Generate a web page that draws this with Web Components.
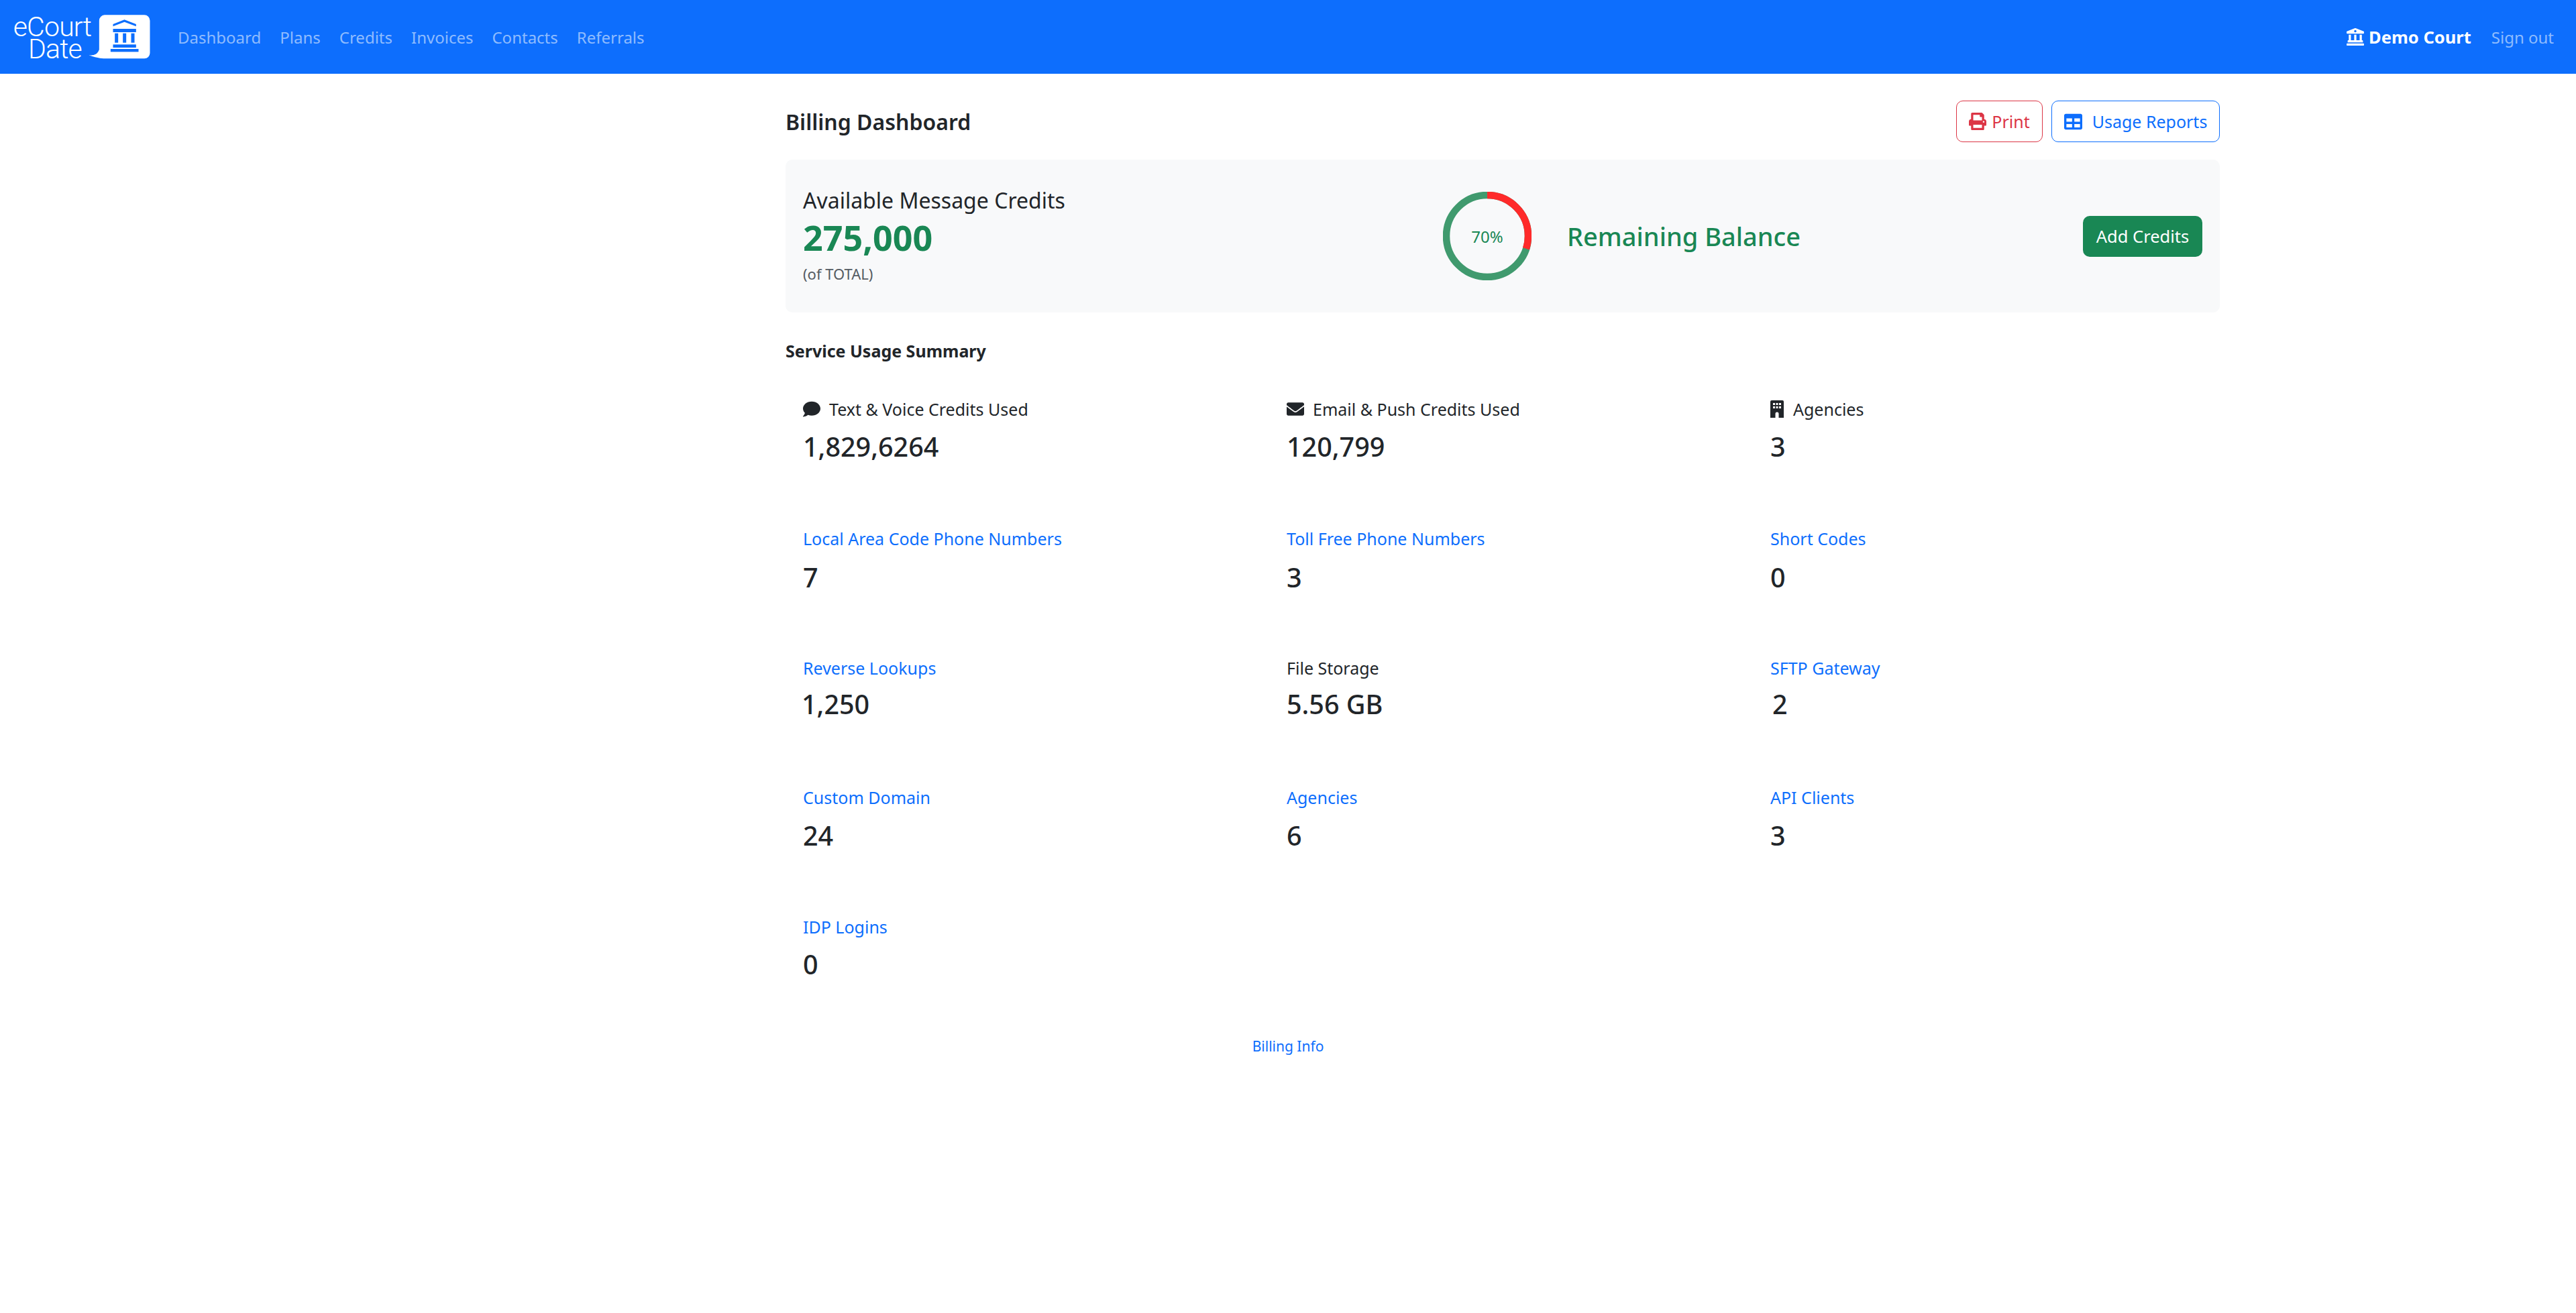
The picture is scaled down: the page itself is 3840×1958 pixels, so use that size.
<!DOCTYPE html>
<html lang="en">
<head>
<meta charset="utf-8">
<title>Billing Dashboard</title>
<style>
  html, body { margin: 0; background: #fff; }
  body { font-family: "Noto Sans", "Open Sans", sans-serif; color: #212529; font-size: 24px; }
</style>
</head>
<body>
<app-navbar></app-navbar>
<billing-page></billing-page>

<template id="icons">
  <svg id="landmark" viewBox="0 0 512 512"><path d="M501.62 92.11L267.24 2.04a31.958 31.958 0 0 0-22.47 0L10.38 92.11A16.001 16.001 0 0 0 0 107.09V144c0 8.84 7.16 16 16 16h480c8.84 0 16-7.16 16-16v-36.91c0-6.67-4.14-12.64-10.38-14.98zM64 192v160H48c-8.84 0-16 7.16-16 16v48h448v-48c0-8.84-7.16-16-16-16h-16V192h-64v160h-96V192h-64v160h-96V192H64zm432 256H16c-8.84 0-16 7.16-16 16v32c0 8.84 7.16 16 16 16h480c8.84 0 16-7.16 16-16v-32c0-8.84-7.16-16-16-16z"/><circle cx="256" cy="88" r="34" fill="#0d6efd"/></svg>
  <svg id="print" viewBox="0 0 512 512"><path d="M448 192V77.25c0-8.49-3.37-16.62-9.37-22.63L393.37 9.37c-6-6-14.14-9.37-22.63-9.37H96C78.33 0 64 14.33 64 32v160c-35.35 0-64 28.65-64 64v112c0 8.84 7.16 16 16 16h48v96c0 17.67 14.33 32 32 32h320c17.67 0 32-14.33 32-32v-96h48c8.84 0 16-7.16 16-16V256c0-35.35-28.65-64-64-64zm-64 256H128v-96h256v96zm0-224H128V64h192v48c0 8.84 7.16 16 16 16h48v96zm48 72c-13.25 0-24-10.75-24-24 0-13.26 10.75-24 24-24s24 10.74 24 24c0 13.25-10.75 24-24 24z"/></svg>
  <svg id="table" viewBox="0 0 512 512"><path d="M464 32H48C21.49 32 0 53.49 0 80v352c0 26.51 21.49 48 48 48h416c26.51 0 48-21.49 48-48V80c0-26.51-21.49-48-48-48zM224 416H64v-96h160v96zm0-160H64v-96h160v96zm224 160H288v-96h160v96zm0-160H288v-96h160v96z"/></svg>
  <svg id="comment" viewBox="0 0 512 512"><path d="M256 32C114.6 32 0 125.1 0 240c0 49.6 21.4 95 57 130.7C44.5 421.1 2.7 466 2.2 466.5c-2.2 2.3-2.8 5.7-1.5 8.7S4.8 480 8 480c66.3 0 116-31.8 140.6-51.4 32.7 12.3 69 19.4 107.4 19.4 141.4 0 256-93.1 256-208S397.4 32 256 32z"/></svg>
  <svg id="envelope" viewBox="0 0 512 512"><path d="M502.3 190.8c3.9-3.1 9.7-.2 9.7 4.7V400c0 26.5-21.5 48-48 48H48c-26.5 0-48-21.5-48-48V195.6c0-5 5.7-7.8 9.7-4.7 22.4 17.4 52.1 39.5 154.1 113.6 21.1 15.4 56.7 47.8 92.2 47.6 35.7.3 72-32.8 92.3-47.6 102-74.1 131.6-96.3 154-113.7zM256 320c23.2.4 56.6-29.2 73.4-41.4 132.7-96.3 142.8-104.7 173.4-128.7 5.8-4.5 9.2-11.5 9.2-18.9v-19c0-26.5-21.5-48-48-48H48C21.5 64 0 85.5 0 112v19c0 7.4 3.4 14.3 9.2 18.9 30.6 23.9 40.7 32.4 173.4 128.7 16.8 12.2 50.2 41.8 73.4 41.4z"/></svg>
  <svg id="building" viewBox="0 0 20 26"><path fill-rule="evenodd" d="M2 0H18a2 2 0 0 1 2 2V26H12.5V20a2.5 2.5 0 0 0-5 0V26H0V2a2 2 0 0 1 2-2zM4 4v3h3V4zM8.5 4v3h3V4zM13 4v3h3V4zM4 9v3h3V9zM8.5 9v3h3V9zM13 9v3h3V9z"/></svg>
</template>

<script>
const iconMarkup = (name) =>
  document.querySelector("#icons").content.querySelector("#" + name).outerHTML.replace(/id="[^"]*"/, "");

/** Icon */
class FaIcon extends HTMLElement {
  connectedCallback() {
    const root = this.shadowRoot || this.attachShadow({ mode: "open" });
    root.innerHTML = `
<style>
  :host { display: inline-flex; width: var(--icon-w, 26px); height: var(--icon-h, 26px); flex: none; }
  :host([name="building"]) { width: 20px; margin-right: 1px; }
  svg { width: 100%; height: 100%; fill: currentColor; display: block; }
</style>
${iconMarkup(this.getAttribute("name"))}`;
  }
}
customElements.define("fa-icon", FaIcon);

/** Navbar */
class AppNavbar extends HTMLElement {
  constructor() {
    super();
    const links = ["Dashboard", "Plans", "Credits", "Invoices", "Contacts", "Referrals"];
    this.attachShadow({ mode: "open" }).innerHTML = `
<style>
  :host { display: flex; align-items: center; height: 110px; background: #0d6efd; box-sizing: border-box; padding: 0 33px 0 18px; }
  .logo-text { width: 120px; font-family: Roboto, "Liberation Sans", sans-serif; font-weight: 300; font-size: 41px; line-height: 33px; letter-spacing: -0.8px; color: #fff; text-align: center; margin-top: 4px; }
  .logo-text span { display: block; }
  .logo-text .d { padding-left: 8px; }
  .bubble { width: 97px; height: 70px; margin: 0 0 0 -8px; flex: none; }
  nav { display: flex; margin-left: 24px; }
  a { color: rgba(255,255,255,.55); text-decoration: none; padding: 0 14px; white-space: nowrap; }
  .right { margin-left: auto; display: flex; align-items: center; }
  .court { color: #fff; font-weight: 700; font-size: 25.5px; display: flex; align-items: center; gap: 7px; margin-right: 16px; }
  .right a { padding: 0 0 0 14px; }
</style>
<div class="logo-text"><span>eCourt</span><span class="d">Date</span></div>
<svg class="bubble" viewBox="30 30 290 210" fill="#fff">
  <path d="M107 37H285a25 25 0 0 1 25 25V207a25 25 0 0 1-25 25H115C100 232 80 232 37 217C62 219 76 212 83 192V62a25 25 0 0 1 24-25z"/>
  <g fill="#0d6efd">
    <path d="M145 78L196 58L248 78V88L196 68L145 88z"/>
    <rect x="145" y="99" width="103" height="15"/>
    <rect x="153" y="119" width="15" height="42"/>
    <rect x="189" y="119" width="15" height="42"/>
    <rect x="226" y="119" width="15" height="42"/>
    <rect x="145" y="169" width="103" height="14"/>
    <rect x="134" y="189" width="125" height="13"/>
  </g>
</svg>
<nav>${links.map((l) => `<a href="#">${l}</a>`).join("")}</nav>
<div class="right">
  <div class="court"><fa-icon name="landmark"></fa-icon><span>Demo Court</span></div>
  <a href="#">Sign out</a>
</div>`;
  }
}
customElements.define("app-navbar", AppNavbar);

/** Outline button */
class OutlineButton extends HTMLElement {
  constructor() {
    super();
    this.attachShadow({ mode: "open" }).innerHTML = `
<style>
  :host { display: inline-flex; align-items: center; justify-content: center; box-sizing: border-box; height: 62px; border: 1.6px solid currentColor; border-radius: 10px; font-size: 25px; white-space: nowrap; }
</style>
<slot></slot>`;
  }
}
customElements.define("outline-button", OutlineButton);

/** Progress ring */
class ProgressRing extends HTMLElement {
  constructor() {
    super();
    const pct = Number(this.getAttribute("remaining") || 70);
    const r = 61;
    const c = 2 * Math.PI * r;
    this.attachShadow({ mode: "open" }).innerHTML = `
<style>
  :host { display: grid; place-items: center; width: 132px; height: 132px; flex: none; font-size: 24px; color: #198754; }
  svg, span { grid-area: 1 / 1; }
  svg { width: 132px; height: 132px; transform: rotate(-90deg); }
  circle { fill: none; stroke-width: 10.5; }
</style>
<svg viewBox="0 0 132 132">
  <circle cx="66" cy="66" r="${r}" stroke="#409a6e"></circle>
  <circle cx="66" cy="66" r="${r}" stroke="#ff2a2a" stroke-dasharray="${(c * (100 - pct)) / 100} ${c}"></circle>
</svg>
<span>${pct}%</span>`;
  }
}
customElements.define("progress-ring", ProgressRing);

/** Balance panel */
class BalancePanel extends HTMLElement {
  constructor() {
    super();
    this.attachShadow({ mode: "open" }).innerHTML = `
<style>
  :host { display: grid; grid-template-columns: 954px 1fr auto; align-items: center; height: 228px; box-sizing: border-box; padding: 0 26px; background: #f8f9fa; border-radius: 10px; }
  .title { font-size: 32px; line-height: 42px; margin-top: -2px; }
  .num { font-size: 52px; line-height: 62px; font-weight: 700; color: #198754; margin-top: 3px; }
  .sub { font-size: 22px; line-height: 34px; color: #555c63; margin-top: 6px; }
  .mid { display: flex; align-items: center; gap: 53px; }
  .bal { font-size: 38px; font-weight: 500; color: #198754; white-space: nowrap; }
  .add { display: flex; align-items: center; justify-content: center; width: 178px; height: 61px; background: #198754; color: #fff; border-radius: 10px; font-size: 25.5px; }
</style>
<div>
  <div class="title">Available Message Credits</div>
  <div class="num">275,000</div>
  <div class="sub">(of TOTAL)</div>
</div>
<div class="mid"><progress-ring remaining="70"></progress-ring><div class="bal">Remaining Balance</div></div>
<div class="add">Add Credits</div>`;
  }
}
customElements.define("balance-panel", BalancePanel);

/** One figure of the usage summary */
class UsageStat extends HTMLElement {
  constructor() {
    super();
    const icon = this.getAttribute("icon");
    const link = this.hasAttribute("link");
    const nudge = this.getAttribute("nudge") || 0;
    const dy = Number(this.getAttribute("dy") || 0);
    this.attachShadow({ mode: "open" }).innerHTML = `
<style>
  :host { display: block; height: 193px; }
  .label { display: flex; align-items: center; height: 40px; margin-top: -2px; font-size: 25px; white-space: nowrap; gap: 13px; color: ${link ? "#0d6efd" : "#212529"}; }
  .value { font-size: 39.5px; font-weight: 500; line-height: 50px; margin-top: ${11 + dy}px; margin-left: ${nudge}px; }
</style>
<div class="label">${icon ? `<fa-icon name="${icon}"></fa-icon>` : ""}<span>${this.getAttribute("label")}</span></div>
<div class="value">${this.getAttribute("value")}</div>`;
  }
}
customElements.define("usage-stat", UsageStat);

/** Page */
class BillingPage extends HTMLElement {
  constructor() {
    super();
    const stats = [
      ["Text &amp; Voice Credits Used", "1,829,6264", "comment", 0],
      ["Email &amp; Push Credits Used", "120,799", "envelope", 0],
      ["Agencies", "3", "building", 0],
      ["Local Area Code Phone Numbers", "7", "", 1],
      ["Toll Free Phone Numbers", "3", "", 1],
      ["Short Codes", "0", "", 1],
      ["Reverse Lookups", "1,250", "", 1, -2],
      ["File Storage", "5.56 GB", "", 0],
      ["SFTP Gateway", "2", "", 1, 3],
      ["Custom Domain", "24", "", 1],
      ["Agencies", "6", "", 1],
      ["API Clients", "3", "", 1],
      ["IDP Logins", "0", "", 1],
    ];
    const rowDy = [0, 2, -2, 1, 0];
    this.attachShadow({ mode: "open" }).innerHTML = `
<style>
  :host { display: grid; grid-template-columns: 1171px 2138px; }
  main { grid-column: 2; }
  .head { display: flex; align-items: center; justify-content: space-between; height: 128px; box-sizing: border-box; padding-top: 14px; }
  h1 { margin: 0; font-size: 32px; font-weight: 600; }
  .btns { display: flex; gap: 13px; }
  .print { color: #dc3545; width: 129px; gap: 8px; }
  .usage { color: #0d6efd; width: 251px; gap: 15px; --icon-w: 27px; --icon-h: 27px; }
  h2 { margin: 39px 0 0; font-size: 25px; line-height: 36px; font-weight: 700; }
  .grid { display: grid; grid-template-columns: repeat(3, 721px); padding-left: 26px; margin-top: 51px; }
  .foot { grid-column: 1 / -1; width: 3840px; text-align: center; margin-top: -11px; font-size: 21px; }
  .foot a { color: #0d6efd; text-decoration: none; }
</style>
<main>
<div class="head">
  <h1>Billing Dashboard</h1>
  <div class="btns">
    <outline-button class="print"><fa-icon name="print"></fa-icon>Print</outline-button>
    <outline-button class="usage"><fa-icon name="table"></fa-icon>Usage Reports</outline-button>
  </div>
</div>
<balance-panel></balance-panel>
<h2>Service Usage Summary</h2>
<div class="grid">
${stats.map(([l, v, i, k, n], idx) => `<usage-stat label="${l}" value="${v}" dy="${rowDy[Math.floor(idx / 3)]}" ${i ? `icon="${i}"` : ""} ${k ? "link" : ""} ${n ? `nudge="${n}"` : ""}></usage-stat>`).join("")}
</div>
</main>
<div class="foot"><a href="#">Billing Info</a></div>`;
  }
}
customElements.define("billing-page", BillingPage);
</script>
</body>
</html>
